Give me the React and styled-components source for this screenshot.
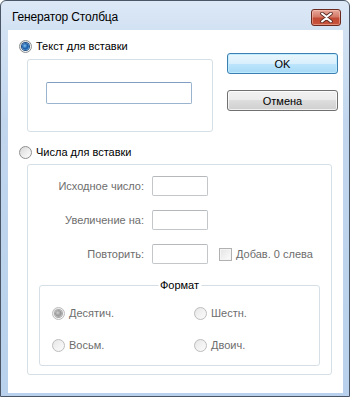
import React from 'react';
import styled, { createGlobalStyle } from 'styled-components';

const GlobalStyle = createGlobalStyle`
  html, body {
    margin: 0;
    padding: 0;
    background: #ffffff;
  }
  body {
    font-family: "Liberation Sans", Arial, sans-serif;
    font-size: 11px;
  }
`;

const Window = styled.div`
  width: 350px;
  height: 397px;
  box-sizing: border-box;
  border: 1px solid #4a5666;
  border-radius: 6px 6px 0 0;
  background: linear-gradient(180deg, #dce8f6 0px, #d3e2f3 28px, #c2d7ee 120px, #b9d1ec 100%);
  display: flex;
  flex-direction: column;
  overflow: hidden;
`;

const TitleBar = styled.div`
  height: 29px;
  flex: none;
  display: flex;
  align-items: flex-start;
  justify-content: space-between;
  padding: 0 8px 0 11px;
`;

const Title = styled.span`
  margin-top: 8px;
  font-size: 12px;
  line-height: 16px;
  letter-spacing: -0.15px;
  color: #000;
`;

const CloseButton = styled.div`
  margin-top: 8px;
  width: 30px;
  height: 17px;
  box-sizing: border-box;
  border: 1px solid #6b2a20;
  border-radius: 3px;
  background: linear-gradient(180deg, #e9a99b 0%, #d47a68 45%, #c24a35 55%, #c9533c 100%);
  box-shadow: inset 0 0 0 1px rgba(255, 210, 200, 0.45);
  display: flex;
  align-items: center;
  justify-content: center;
`;

const Client = styled.div`
  flex: 1;
  margin: 0 6px 3px 7px;
  background: #ffffff;
  padding: 10px 0 0 11px;
  display: flex;
  flex-direction: column;
`;

const TopSection = styled.div`
  display: flex;
`;

const LeftCol = styled.div`
  width: 193px;
  display: flex;
  flex-direction: column;
`;

const RightCol = styled.div`
  margin-left: 15px;
  padding-top: 13px;
  display: flex;
  flex-direction: column;
  gap: 16px;
`;

const Spacer = styled.div`
  height: ${(p) => p.$h}px;
`;

const RadioRow = styled.label`
  display: flex;
  align-items: center;
  height: 13px;
  gap: 4px;
  color: ${(p) => (p.$disabled ? '#6d6d6d' : '#000')};
  white-space: nowrap;
  line-height: 13px;
`;

const RadioCircle = styled.span`
  width: 13px;
  height: 13px;
  flex: none;
  box-sizing: border-box;
  border-radius: 50%;
  border: 1px solid ${(p) => (p.$disabled ? '#bcbcbc' : '#8e8f8f')};
  background: ${(p) =>
    p.$disabled
      ? 'linear-gradient(135deg, #e6e6e6 0%, #f4f4f4 60%, #fafafa 100%)'
      : 'linear-gradient(135deg, #d8d8d8 0%, #f0f0f0 60%, #fdfdfd 100%)'};
  display: flex;
  align-items: center;
  justify-content: center;

  &::after {
    content: '';
    display: ${(p) => (p.$checked ? 'block' : 'none')};
    width: 7px;
    height: 7px;
    border-radius: 50%;
    background: ${(p) =>
      p.$disabled
        ? 'radial-gradient(circle at 40% 40%, #d0d0d0 0%, #9a9a9a 45%, #b8b8b8 100%)'
        : 'radial-gradient(circle at 40% 40%, #7fc3f4 0%, #1f5fa8 45%, #3a8fd8 100%)'};
    box-shadow: 0 0 0 1px ${(p) => (p.$disabled ? '#a8a8a8' : '#1c4f86')};
  }
`;

const GroupBox = styled.div`
  box-sizing: border-box;
  border: 1px solid #d5dfe5;
  border-radius: 3px;
  margin-left: 8px;
  width: ${(p) => p.$w}px;
  height: ${(p) => p.$h}px;
  margin-top: ${(p) => p.$mt}px;
`;

const TextGroup = styled(GroupBox)`
  padding: 22px 0 0 18px;
`;

const NumberGroup = styled(GroupBox)`
  padding: 11px 0 0 0;
  display: flex;
  flex-direction: column;
`;

const TextInput = styled.div`
  box-sizing: border-box;
  width: ${(p) => p.$w}px;
  height: ${(p) => p.$h}px;
  background: #fff;
  border: 1px solid ${(p) => (p.$disabled ? '#c3c7ca' : '#9ab3cf')};
  border-top-color: ${(p) => (p.$disabled ? '#b5b9bc' : '#7f9ec2')};
  border-radius: 2px;
`;

const Button = styled.div`
  box-sizing: border-box;
  width: 111px;
  height: 21px;
  border-radius: 3px;
  border: 1px solid ${(p) => (p.$default ? '#3c7fb1' : '#707070')};
  background: ${(p) =>
    p.$default
      ? 'linear-gradient(180deg, #eaf6fd 0%, #d9f0fc 50%, #bee6fd 50%, #a7d9f5 100%)'
      : 'linear-gradient(180deg, #f2f2f2 0%, #ebebeb 50%, #dddddd 50%, #cfcfcf 100%)'};
  box-shadow: inset 0 0 0 1px ${(p) => (p.$default ? 'rgba(190, 235, 255, 0.9)' : 'rgba(255, 255, 255, 0.7)')};
  display: flex;
  align-items: center;
  justify-content: center;
  color: #000;
  line-height: 14px;
`;

const FieldsGrid = styled.div`
  display: grid;
  grid-template-columns: 119px 56px auto;
  column-gap: 5px;
  row-gap: 14px;
  align-items: center;
`;

const FieldLabel = styled.span`
  text-align: right;
  color: #6d6d6d;
  white-space: nowrap;
  margin-right: 3px;
`;

const CheckRow = styled.label`
  margin-left: 6px;
  display: flex;
  align-items: center;
  gap: 4px;
  color: #6d6d6d;
  white-space: nowrap;
`;

const CheckBox = styled.span`
  width: 13px;
  height: 13px;
  box-sizing: border-box;
  border: 1px solid #b1b1b1;
  background: linear-gradient(135deg, #e3e3e3 0%, #f5f5f5 70%, #fcfcfc 100%);
  box-shadow: inset 0 0 0 1px #f4f4f4;
`;

const FormatBox = styled.div`
  position: relative;
  box-sizing: border-box;
  margin: 21px 0 0 11px;
  width: 281px;
  height: 81px;
  border: 1px solid #d5dfe5;
  border-radius: 3px;
  padding: 21px 0 0 12px;
  display: grid;
  grid-template-columns: 142px auto;
  grid-auto-rows: 13px;
  row-gap: 19px;
`;

const Legend = styled.span`
  position: absolute;
  top: -9px;
  left: 50%;
  transform: translateX(-50%);
  background: #fff;
  padding: 0 2px;
  color: #000;
  line-height: 16px;
`;

function Radio({ checked, disabled, children }) {
  return (
    <RadioRow $disabled={disabled}>
      <RadioCircle $checked={checked} $disabled={disabled} />
      <span>{children}</span>
    </RadioRow>
  );
}

export default function App() {
  return (
    <>
      <GlobalStyle />
      <Window>
        <TitleBar>
          <Title>Генератор Столбца</Title>
          <CloseButton>
            <svg width="13" height="11" viewBox="0 0 13 11">
              <path
                d="M2 1.5 L6.5 5 L11 1.5 M2 9.5 L6.5 6 L11 9.5"
                stroke="#5a2a22"
                strokeWidth="3.6"
                fill="none"
                strokeLinecap="round"
              />
              <path
                d="M2 1.5 L6.5 5 L11 1.5 M2 9.5 L6.5 6 L11 9.5"
                stroke="#ffffff"
                strokeWidth="2"
                fill="none"
                strokeLinecap="round"
              />
            </svg>
          </CloseButton>
        </TitleBar>
        <Client>
          <TopSection>
            <LeftCol>
              <Radio checked>Текст для вставки</Radio>
              <TextGroup $w={186} $h={73} $mt={6}>
                <TextInput $w={146} $h={22} />
              </TextGroup>
            </LeftCol>
            <RightCol>
              <Button $default>OK</Button>
              <Button>Отмена</Button>
            </RightCol>
          </TopSection>
          <Spacer $h={14} />
          <Radio>Числа для вставки</Radio>
          <NumberGroup $w={305} $h={211} $mt={5}>
            <FieldsGrid>
              <FieldLabel>Исходное число:</FieldLabel>
              <TextInput $w={56} $h={20} $disabled />
              <span />
              <FieldLabel>Увеличение на:</FieldLabel>
              <TextInput $w={56} $h={20} $disabled />
              <span />
              <FieldLabel>Повторить:</FieldLabel>
              <TextInput $w={56} $h={20} $disabled />
              <CheckRow>
                <CheckBox />
                <span>Добав. 0 слева</span>
              </CheckRow>
            </FieldsGrid>
            <FormatBox>
              <Legend>Формат</Legend>
              <Radio checked disabled>Десятич.</Radio>
              <Radio disabled>Шестн.</Radio>
              <Radio disabled>Восьм.</Radio>
              <Radio disabled>Двоич.</Radio>
            </FormatBox>
          </NumberGroup>
        </Client>
      </Window>
    </>
  );
}
